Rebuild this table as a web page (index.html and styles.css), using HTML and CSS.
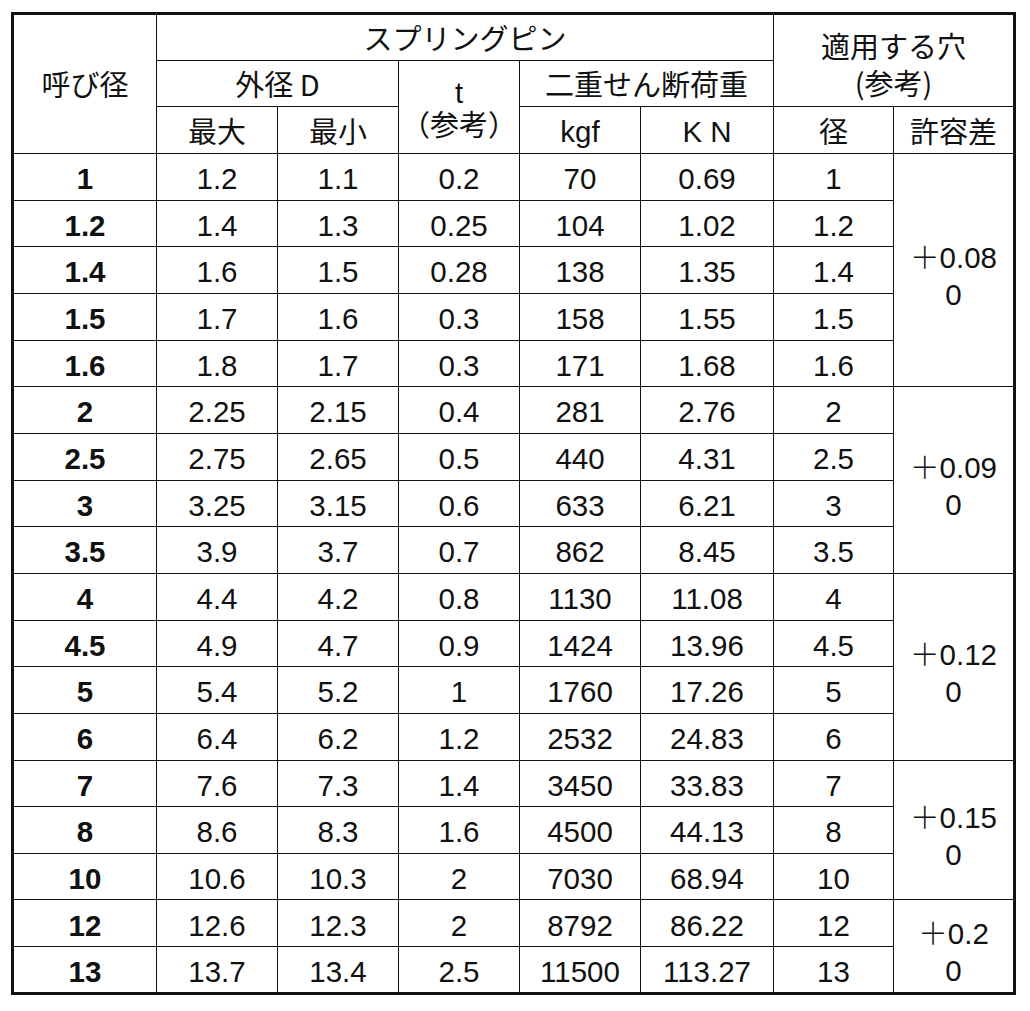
FILE: index.html
```html
<!DOCTYPE html>
<html lang="ja">
<head>
<meta charset="utf-8">
<title>スプリングピン</title>
<link rel="stylesheet" href="styles.css">
</head>
<body>
<div class="wrap">
<table class="spec">
<colgroup>
<col class="c1"><col class="c2"><col class="c2"><col class="c2"><col class="c2"><col class="c6"><col class="c7"><col class="c8">
</colgroup>
<tbody>
<tr class="h"><td rowspan="3" class="jp">呼び径</td><td colspan="5" class="jp">スプリングピン</td><td colspan="2" rowspan="2" class="jp two"><span class="l1">適用する穴</span><br><span class="l2">(参考)</span></td></tr>
<tr class="h"><td colspan="2" class="jp">外径 D</td><td rowspan="2" class="jp tcell"><span class="lat">t</span><br>（参考）</td><td colspan="2" class="jp">二重せん断荷重</td></tr>
<tr class="h"><td class="jp">最大</td><td class="jp">最小</td><td>kgf</td><td>K N</td><td class="jp">径</td><td class="jp">許容差</td></tr>
<tr><td class="b">1</td><td>1.2</td><td>1.1</td><td>0.2</td><td>70</td><td>0.69</td><td>1</td><td rowspan="5" class="tol"><span class="plus">＋</span>0.08<br>0</td></tr>
<tr><td class="b">1.2</td><td>1.4</td><td>1.3</td><td>0.25</td><td>104</td><td>1.02</td><td>1.2</td></tr>
<tr><td class="b">1.4</td><td>1.6</td><td>1.5</td><td>0.28</td><td>138</td><td>1.35</td><td>1.4</td></tr>
<tr><td class="b">1.5</td><td>1.7</td><td>1.6</td><td>0.3</td><td>158</td><td>1.55</td><td>1.5</td></tr>
<tr><td class="b">1.6</td><td>1.8</td><td>1.7</td><td>0.3</td><td>171</td><td>1.68</td><td>1.6</td></tr>
<tr><td class="b">2</td><td>2.25</td><td>2.15</td><td>0.4</td><td>281</td><td>2.76</td><td>2</td><td rowspan="4" class="tol"><span class="plus">＋</span>0.09<br>0</td></tr>
<tr><td class="b">2.5</td><td>2.75</td><td>2.65</td><td>0.5</td><td>440</td><td>4.31</td><td>2.5</td></tr>
<tr><td class="b">3</td><td>3.25</td><td>3.15</td><td>0.6</td><td>633</td><td>6.21</td><td>3</td></tr>
<tr><td class="b">3.5</td><td>3.9</td><td>3.7</td><td>0.7</td><td>862</td><td>8.45</td><td>3.5</td></tr>
<tr><td class="b">4</td><td>4.4</td><td>4.2</td><td>0.8</td><td>1130</td><td>11.08</td><td>4</td><td rowspan="4" class="tol"><span class="plus">＋</span>0.12<br>0</td></tr>
<tr><td class="b">4.5</td><td>4.9</td><td>4.7</td><td>0.9</td><td>1424</td><td>13.96</td><td>4.5</td></tr>
<tr><td class="b">5</td><td>5.4</td><td>5.2</td><td>1</td><td>1760</td><td>17.26</td><td>5</td></tr>
<tr><td class="b">6</td><td>6.4</td><td>6.2</td><td>1.2</td><td>2532</td><td>24.83</td><td>6</td></tr>
<tr><td class="b">7</td><td>7.6</td><td>7.3</td><td>1.4</td><td>3450</td><td>33.83</td><td>7</td><td rowspan="3" class="tol"><span class="plus">＋</span>0.15<br>0</td></tr>
<tr><td class="b">8</td><td>8.6</td><td>8.3</td><td>1.6</td><td>4500</td><td>44.13</td><td>8</td></tr>
<tr><td class="b">10</td><td>10.6</td><td>10.3</td><td>2</td><td>7030</td><td>68.94</td><td>10</td></tr>
<tr><td class="b">12</td><td>12.6</td><td>12.3</td><td>2</td><td>8792</td><td>86.22</td><td>12</td><td rowspan="2" class="tol"><span class="plus">＋</span>0.2<br>0</td></tr>
<tr><td class="b">13</td><td>13.7</td><td>13.4</td><td>2.5</td><td>11500</td><td>113.27</td><td>13</td></tr>
</tbody>
</table>
</div>
</body>
</html>
```
FILE: styles.css
```css
html, body {
  margin: 0;
  padding: 0;
  background: #ffffff;
}

.wrap {
  padding: 12px 0 0 11px;
}

.spec {
  border-collapse: collapse;
  table-layout: fixed;
  width: 1005px;
  border: 3px solid #111;
  font-family: "Liberation Sans", "Noto Sans CJK JP", sans-serif;
  font-size: 29.5px;
  color: #111;
}

.c1 { width: 144px; }
.c2 { width: 121px; }
.c6 { width: 133px; }
.c7 { width: 120px; }
.c8 { width: 121px; }

.spec tr {
  height: 46.67px;
}

.spec td {
  border: 1px solid #111;
  padding: 4px 0 0 0;
  text-align: center;
  vertical-align: middle;
  line-height: 1;
  white-space: nowrap;
}

.spec td.jp {
  font-family: "Noto Sans CJK JP", "Liberation Sans", sans-serif;
  font-size: 29px;
  padding-top: 0;
}

.spec td.b {
  font-weight: bold;
}

.spec td.two {
  line-height: 37px;
  padding-top: 6px;
}

.spec td.tcell {
  line-height: 30px;
}

.lat {
  font-family: "Liberation Sans", sans-serif;
}

.spec td.tol {
  line-height: 37px;
  padding-top: 10px;
}

.plus {
  font-family: "Noto Sans CJK JP", sans-serif;
  font-weight: 300;
}
```
